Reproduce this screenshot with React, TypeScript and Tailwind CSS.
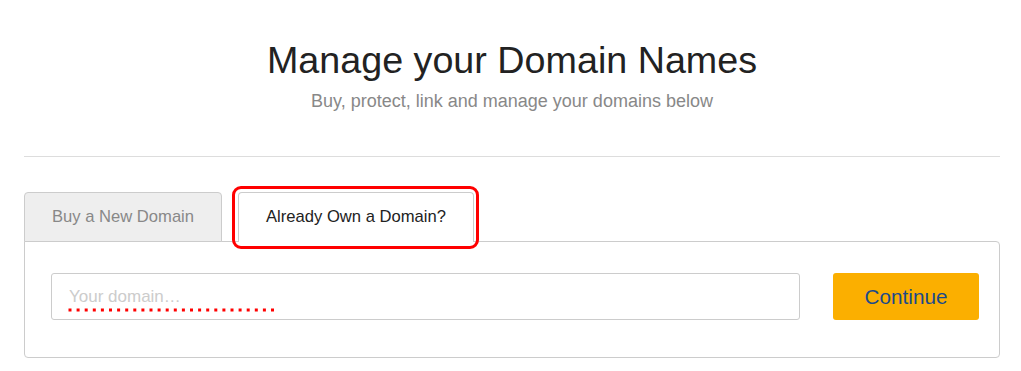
import React from "react";

function Tab({ label, active }: { label: string; active?: boolean }) {
  if (active) {
    return (
      <div className="relative">
        <div className="relative z-10 -mb-px flex h-[50px] items-center rounded-t-[4px] border border-b-0 border-[#ccc] bg-white px-[27px] text-[16.6px] text-[#222]">
          {label}
        </div>
        {/* red highlight around the active tab */}
        <span className="pointer-events-none absolute -left-[6px] -right-[5px] -top-[6px] -bottom-[8px] z-20 rounded-[9px] border-[3px] border-[#f00]" />
      </div>
    );
  }
  return (
    <div className="-mb-px flex h-[50px] items-center rounded-t-[4px] border border-[#ccc] bg-[#eee] px-[27px] text-[16.6px] text-[#888]">
      {label}
    </div>
  );
}

export default function App() {
  return (
    <div className="min-h-[371px] w-full bg-white font-['Liberation_Sans',Arial,sans-serif]">
      <div className="pl-6 pr-[21px]">
        <div className="pt-[40px] text-center">
          <h1 className="text-[37.7px] leading-[40px] text-[#222]">
            Manage your Domain Names
          </h1>
          <p className="mt-[11px] text-[18px] leading-[20px] text-[#888]">
            Buy, protect, link and manage your domains below
          </p>
        </div>

        <hr className="mt-[45px] border-t border-[#ddd]" />

        <div className="mt-[35px]">
          <div className="flex gap-[16px]">
            <Tab label="Buy a New Domain" />
            <Tab label="Already Own a Domain?" active />
          </div>

          <div className="flex items-center gap-[33px] rounded-b-[4px] rounded-tr-[4px] border border-[#ccc] pb-[37px] pl-[26px] pr-[20px] pt-[31px]">
            <div className="relative flex-1">
              <input
                type="text"
                placeholder="Your domain…"
                className="h-[47px] w-full rounded-[3px] border border-[#ccc] px-[17px] text-[17px] text-[#333] outline-none placeholder:text-[#ccc]"
              />
              {/* red dotted underline under the placeholder */}
              <svg
                className="pointer-events-none absolute left-[16px] top-[35px]"
                width="210"
                height="4"
                viewBox="0 0 210 4"
              >
                <line
                  x1="1.5"
                  y1="2"
                  x2="208"
                  y2="2"
                  stroke="#f00"
                  strokeWidth="3"
                  strokeDasharray="3 5.1"
                />
              </svg>
            </div>
            <button className="h-[47px] w-[146px] rounded-[3px] bg-[#fbaf00] text-[20.7px] text-[#1c4a89]">
              Continue
            </button>
          </div>
        </div>
      </div>
    </div>
  );
}
